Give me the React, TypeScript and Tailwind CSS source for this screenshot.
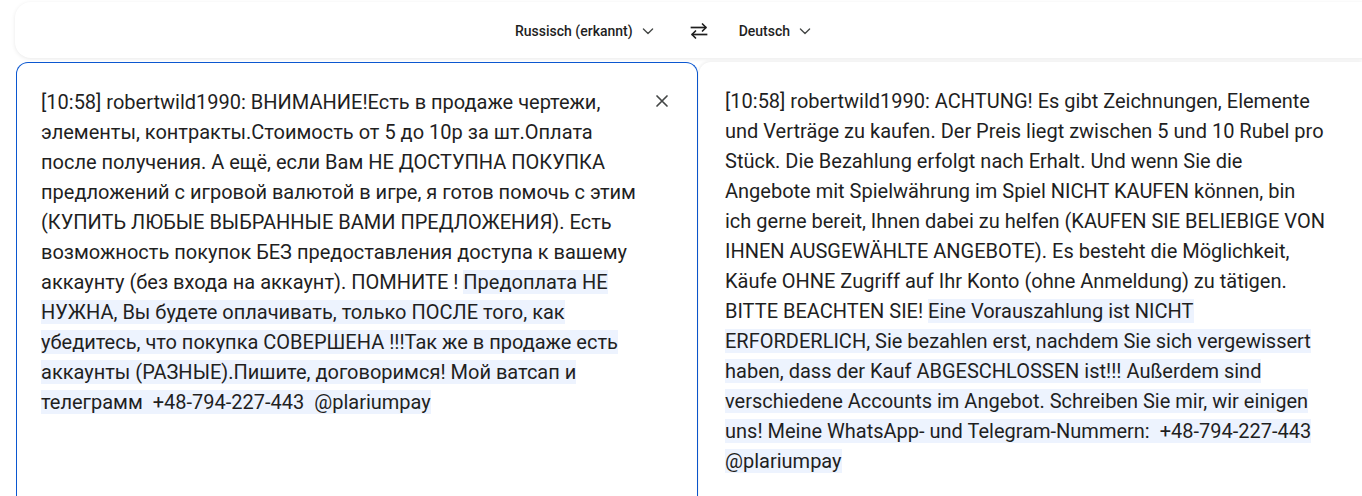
import React from "react";

const Chevron = () => (
  <svg width="20" height="20" viewBox="0 0 24 24" fill="none" stroke="#444746" strokeWidth="1.6" strokeLinecap="round" strokeLinejoin="round">
    <path d="M6.5 9.5l5.5 5.5 5.5-5.5" />
  </svg>
);

const Swap = () => (
  <svg width="24" height="24" viewBox="0 0 24 24" fill="none" stroke="#1f1f1f" strokeWidth="1.7" strokeLinecap="square">
    <path d="M4.5 8.5h14" />
    <path d="M15.5 5l3.5 3.5-3.5 3.5" strokeLinecap="round" strokeLinejoin="round" />
    <path d="M19.5 15.5h-14" />
    <path d="M8.5 12l-3.5 3.5 3.5 3.5" strokeLinecap="round" strokeLinejoin="round" />
  </svg>
);

const CloseX = () => (
  <svg width="24" height="24" viewBox="0 0 24 24" fill="none" stroke="#444746" strokeWidth="1.7" strokeLinecap="round">
    <path d="M7 7l10 10M17 7L7 17" />
  </svg>
);

const hl = "bg-[#edf3fe]";

export default function App() {
  return (
    <div
      className="w-[1362px] h-[496px] overflow-hidden bg-white"
      style={{ fontFamily: "Roboto, 'Noto Sans', sans-serif" }}
    >
      <div className="ml-[15px] mr-[-30px] mt-[2px] h-[56px] rounded-2xl bg-white shadow-[0_1px_4px_rgba(0,0,0,0.09)] flex items-center pl-[500px] pt-[2px]">
        <div className="flex items-center gap-[5px] text-[14px] font-medium text-[#1f1f1f]">
          <span>Russisch (erkannt)</span>
          <Chevron />
        </div>
        <div className="ml-[29px] mr-[28px] flex items-center">
          <Swap />
        </div>
        <div className="flex items-center gap-[5px] text-[14px] font-medium text-[#1f1f1f]">
          <span>Deutsch</span>
          <Chevron />
        </div>
      </div>

      <div className="flex mt-[4px]">
        <div className="ml-[16px] w-[682px] h-[440px] rounded-t-xl border border-[#0b57d0] border-b-0 pl-[24px] pt-[24px] flex">
          <div className="w-[602px] text-[20px] leading-[30px] text-[#1f1f1f]">
            [10:58] robertwild1990: ВНИМАНИЕ!Есть в продаже чертежи, элементы, контракты.Стоимость от 5 до 10р за шт.Оплата после получения. А ещё, если Вам НЕ ДОСТУПНА ПОКУПКА предложений с игровой валютой в игре, я готов помочь с этим (КУПИТЬ ЛЮБЫЕ ВЫБРАННЫЕ ВАМИ ПРЕДЛОЖЕНИЯ). Есть возможность покупок БЕЗ предоставления доступа к вашему аккаунту (без входа на аккаунт). ПОМНИТЕ !{" "}
            <span className={hl}>
              Предоплата НЕ НУЖНА, Вы будете оплачивать, только ПОСЛЕ того, как убедитесь, что покупка СОВЕРШЕНА !!!Так же в продаже есть аккаунты (РАЗНЫЕ).Пишите, договоримся! Мой ватсап и телеграмм&nbsp; +48-794-227-443&nbsp; @plariumpay
            </span>
          </div>
          <div className="ml-[7px] mt-[2px]">
            <CloseX />
          </div>
        </div>

        <div className="ml-[1px] flex-1 h-[440px] rounded-tl-xl bg-white shadow-[-1px_-1px_3px_rgba(0,0,0,0.06)] pl-[26px] pt-[24px]">
          <div className="w-[601px] text-[20px] leading-[30px] text-[#1f1f1f]">
            [10:58] robertwild1990: ACHTUNG! Es gibt Zeichnungen, Elemente und Verträge zu kaufen. Der Preis liegt zwischen 5 und 10 Rubel pro Stück. Die Bezahlung erfolgt nach Erhalt. Und wenn Sie die Angebote mit Spielwährung im Spiel NICHT KAUFEN können, bin ich gerne bereit, Ihnen dabei zu helfen (KAUFEN SIE BELIEBIGE VON IHNEN AUSGEWÄHLTE ANGEBOTE). Es besteht die Möglichkeit, Käufe OHNE Zugriff auf Ihr Konto (ohne Anmeldung) zu tätigen. BITTE BEACHTEN SIE!{" "}
            <span className={hl}>
              Eine Vorauszahlung ist NICHT ERFORDERLICH, Sie bezahlen erst, nachdem Sie sich vergewissert haben, dass der Kauf ABGESCHLOSSEN ist!!! Außerdem sind verschiedene Accounts im Angebot. Schreiben Sie mir, wir einigen uns! Meine WhatsApp- und Telegram-Nummern:&nbsp; +48-794-227-443 @plariumpay
            </span>
          </div>
        </div>
      </div>
    </div>
  );
}
